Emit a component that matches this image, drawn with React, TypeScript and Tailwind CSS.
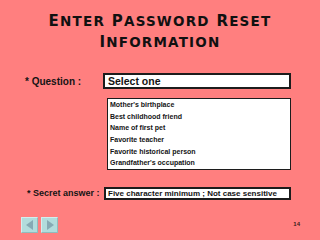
import React from 'react';

const questions = [
  "Mother's birthplace",
  'Best childhood friend',
  'Name of first pet',
  'Favorite teacher',
  'Favorite historical person',
  "Grandfather's occupation",
];

const Cap: React.FC<{ big: string; rest: string }> = ({ big, rest }) => (
  <span>
    <span className="text-[15px]">{big}</span>
    <span className="text-[13.5px] uppercase">{rest}</span>
  </span>
);

const NavBtn: React.FC<{ dir: 'left' | 'right' }> = ({ dir }) => (
  <div className="w-[17px] h-[16px] bg-[#b2dcdc] border border-t-[#d4eeee] border-l-[#d4eeee] border-b-[#8fbdbd] border-r-[#8fbdbd] flex items-center justify-center">
    <svg width="8" height="10" viewBox="0 0 8 10">
      {dir === 'left' ? (
        <polygon points="7,0 7,10 0,5" fill="#86aab4" />
      ) : (
        <polygon points="1,0 1,10 8,5" fill="#86aab4" />
      )}
    </svg>
  </div>
);

export default function App() {
  return (
    <div
      className="w-[320px] h-[240px] bg-[#ff7f7f] flex flex-col text-[#141414] overflow-hidden"
      style={{ fontFamily: '"Liberation Sans", Arial, sans-serif' }}
    >
      {/* Title */}
      <div
        className="pt-[11px] text-center font-bold leading-[19.5px] tracking-[1.2px] text-[#111]"
        style={{ fontFamily: '"DejaVu Sans", sans-serif' }}
      >
        <div>
          <Cap big="E" rest="nter" /> <Cap big="P" rest="assword" /> <Cap big="R" rest="eset" />
        </div>
        <div>
          <Cap big="I" rest="nformation" />
        </div>
      </div>

      {/* Question */}
      <div className="mt-[21px] flex items-center h-[16px]">
        <div className="w-[103px] pl-[25px] text-[10px] font-bold">* Question :</div>
        <div className="w-[188px] h-[16px] bg-white border-2 border-[#1c1c1c] pl-[3px] text-[10.5px] font-bold leading-[12px] flex items-center">
          Select one
        </div>
      </div>

      {/* Options */}
      <div className="ml-[107px] mt-[9px] w-[184px] h-[72px] bg-white border border-[#1c1c1c] pl-[2px] flex flex-col">
        {questions.map((q) => (
          <div key={q} className="h-[11.7px] leading-[11.7px] text-[7px] font-bold">
            {q}
          </div>
        ))}
      </div>

      {/* Secret answer */}
      <div className="mt-[17px] flex items-center h-[13px]">
        <div className="w-[104px] pl-[27px] text-[9px] font-bold">* Secret answer :</div>
        <div className="w-[187px] h-[13px] bg-white border-2 border-[#1c1c1c] pl-[2px] text-[8px] font-bold flex items-center">
          Five character minimum ; Not case sensitive
        </div>
      </div>

      {/* Footer */}
      <div className="mt-[17px] flex items-start">
        <div className="ml-[21px] flex gap-[3px]">
          <NavBtn dir="left" />
          <NavBtn dir="right" />
        </div>
        <div className="ml-auto mr-[20px] mt-[3px] text-[6px] font-bold text-[#3a1a1a]">14</div>
      </div>
    </div>
  );
}
